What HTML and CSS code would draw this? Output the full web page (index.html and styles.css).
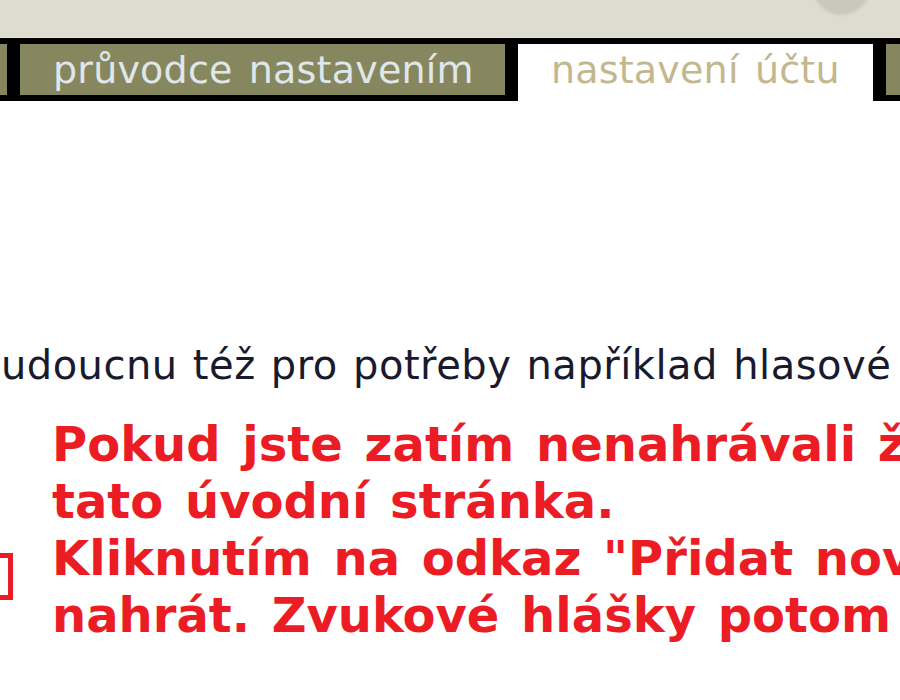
FILE: index.html
```html
<!DOCTYPE html>
<html lang="cs">
<head>
<meta charset="utf-8">
<title>nastavení účtu</title>
<link rel="stylesheet" href="styles.css">
</head>
<body>
<div class="page">
  <header class="header">
    <span class="orb"></span>
  </header>
  <nav class="tabbar">
    <span class="tab tab-edge"></span>
    <a class="tab tab-wizard">průvodce nastavením</a>
    <a class="tab tab-active">nastavení účtu</a>
    <span class="tab tab-next">zvukové hlášky</span>
  </nav>
  <main class="content">
    <p class="intro">budoucnu též pro potřeby například hlasové schránky.</p>
    <div class="notice">
      <span class="notice-icon"></span>
      <p class="notice-text">Pokud jste zatím nenahrávali žádné zvukové hlášky, zobrazí se<br>tato úvodní stránka.<br>Kliknutím na odkaz "Přidat novou hlášku" můžete první hlášku<br>nahrát. Zvukové hlášky potom uvidíte v seznamu.</p>
    </div>
  </main>
</div>
</body>
</html>
```

FILE: styles.css
```css
html, body {
  margin: 0;
  padding: 0;
  background: #ffffff;
  overflow: hidden;
}

.page {
  width: 900px;
  height: 700px;
  overflow: hidden;
  font-family: "DejaVu Sans", Verdana, sans-serif;
}

.header {
  position: relative;
  height: 38px;
  background: #dcdcd0;
  border-bottom: 1px solid #e6e6dc;
  box-sizing: border-box;
}

.orb {
  position: absolute;
  left: 813px;
  top: -42px;
  width: 57px;
  height: 57px;
  border-radius: 50%;
  background: #c8c8bb;
  filter: blur(1.5px);
}

.tabbar {
  display: flex;
  align-items: flex-start;
  gap: 13px;
  height: 63px;
  padding-top: 6px;
  box-sizing: border-box;
  background: #000000;
  white-space: nowrap;
}

.tab {
  flex: none;
  display: block;
  height: 51px;
  line-height: 53px;
  padding-left: 33px;
  box-sizing: border-box;
  font-size: 38px;
  letter-spacing: 0.2px;
  word-spacing: 4px;
  background: #87875f;
  color: #dfe7ea;
  text-decoration: none;
  overflow: hidden;
}

.tab-edge {
  width: 7px;
  padding: 0;
}

.tab-wizard {
  width: 485px;
}

.tab-active {
  width: 355px;
  height: 58px;
  background: #ffffff;
  color: #c2b78d;
}

.tab-next {
  width: 300px;
}

.content {
  padding-top: 241px;
}

.intro {
  margin: 0 0 0 -25px;
  font-size: 40px;
  letter-spacing: 0.5px;
  word-spacing: 2px;
  color: #1a1a2e;
  white-space: nowrap;
}

.notice {
  display: flex;
  align-items: flex-start;
  gap: 39px;
  margin-top: 28px;
}

.notice-icon {
  flex: none;
  width: 40px;
  height: 47px;
  margin-left: -27px;
  margin-top: 137px;
  border: 5px solid #ec1c24;
  box-sizing: border-box;
}

.notice-text {
  margin: 0;
  font-size: 48px;
  line-height: 57px;
  font-weight: bold;
  word-spacing: 5px;
  color: #ec1c24;
  white-space: nowrap;
}
```
